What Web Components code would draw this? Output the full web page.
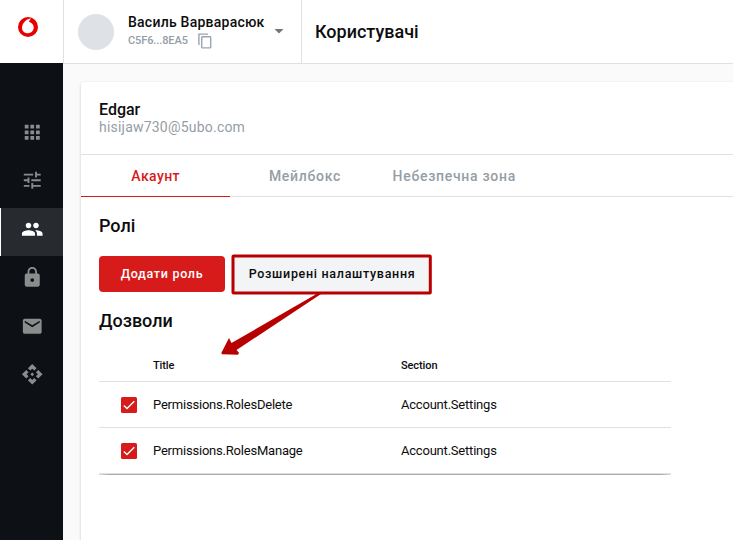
<!DOCTYPE html>
<html lang="uk">
<head>
<meta charset="utf-8">
<title>Користувачі</title>
<style>
html,body{margin:0;height:540px;overflow:hidden}
body{font-family:Roboto,"Liberation Sans",sans-serif;color:#0d0d0d;background:#fafafa}
</style>
</head>
<body>
<admin-app>
  <brand-logo slot="logo"></brand-logo>
  <user-menu slot="top" code="C5F6...8EA5">Василь Варварасюк</user-menu>
  <page-title slot="top">Користувачі</page-title>
  <side-nav slot="nav">
    <nav-item icon="apps"></nav-item>
    <nav-item icon="tune"></nav-item>
    <nav-item icon="people" active></nav-item>
    <nav-item icon="lock"></nav-item>
    <nav-item icon="mail"></nav-item>
    <nav-item icon="api"></nav-item>
  </side-nav>
  <user-card>
    <span slot="name">Edgar</span>
    <span slot="email">hisijaw730@5ubo.com</span>
    <tab-item slot="tabs" active>Акаунт</tab-item>
    <tab-item slot="tabs">Мейлбокс</tab-item>
    <tab-item slot="tabs">Небезпечна зона</tab-item>
    <section-title>Ролі</section-title>
    <button-row>
      <ui-button primary>Додати роль</ui-button>
      <ui-button marked>Розширені налаштування</ui-button>
    </button-row>
    <section-title>Дозволи</section-title>
    <permission-table>
      <permission-row head><span slot="title">Title</span><span slot="section">Section</span></permission-row>
      <permission-row><span slot="title">Permissions.RolesDelete</span><span slot="section">Account.Settings</span></permission-row>
      <permission-row><span slot="title">Permissions.RolesManage</span><span slot="section">Account.Settings</span></permission-row>
    </permission-table>
  </user-card>
</admin-app>
<script>
const define = (name, html) => customElements.define(name, class extends HTMLElement {
  constructor() {
    super();
    this.attachShadow({mode: 'open'}).innerHTML = typeof html === 'function' ? html(this) : html;
  }
});

define('admin-app', `<style>
:host{display:grid;grid-template:64px 476px / 63px 1fr;width:733px;height:540px;overflow:hidden}
.logo{background:#fff;height:63px}
.top{display:flex;box-sizing:border-box;background:#fff;border-bottom:1px solid #e0e0e0;border-left:1px solid #e0e0e0}
.nav{background:#0d1014;margin-top:-1px}
main{padding:18px 0 0 18px;overflow:hidden}
</style><div class="logo"><slot name="logo"></slot></div><header class="top"><slot name="top"></slot></header><nav class="nav"><slot name="nav"></slot></nav><main><slot></slot></main>`);

define('brand-logo', `<style>:host{display:block;padding:17px 0 0 18px}svg{display:block}</style>
<svg width="20" height="20" viewBox="0 0 20 20"><circle cx="10" cy="10" r="10" fill="#e60000"/><path fill="#fff" d="M13.200 1.400C10.500 1.500 8.200 2.900 6.400 4.900C4.900 6.500 4 8.500 4 10.700C4 14 6.600 16.200 9.900 16.200C13.200 16.200 15.700 13.700 15.700 10.500C15.700 7.600 13.900 5.500 11.200 4.900C11.100 3.400 11.900 2.100 13.200 1.400Z"/></svg>`);

define('user-menu', el => `<style>
:host{display:flex;box-sizing:border-box;width:238px;height:63px;padding:14px 0 0 14px;border-right:1px solid #e0e0e0}
.avatar{width:36px;height:36px;border-radius:50%;background:#dee2e6}
.info{margin-left:14px;width:138px}
.name{font:500 14px/16px Roboto,sans-serif;white-space:nowrap;letter-spacing:.24px}
.code{display:flex;align-items:center;font-size:11px;font-weight:500;letter-spacing:-.1px;line-height:16px;color:#959da5;height:18px;margin-top:2px;gap:10px}
.code svg{flex:none}
.arrow{margin:14px 0 0 8px}
</style><div class="avatar"></div><div class="info"><div class="name"><slot></slot></div><div class="code"><span>${el.getAttribute('code')}</span><svg width="14" height="16" viewBox="0 0 14 16" fill="none" stroke="#9ba5ae" stroke-width="1.4"><path d="M.9 12V1.1H10"/><rect x="3.7" y="3.7" width="9" height="11.2" rx=".7"/></svg></div></div><svg class="arrow" width="10" height="6" viewBox="0 0 10 6"><path d="M.5 1h9L5 5.5z" fill="#757575"/></svg>`);

define('page-title', `<style>:host{display:block;padding:21px 0 0 13px;font-size:18px;line-height:21px;font-weight:500}</style><slot></slot>`);

define('side-nav', `<style>:host{display:flex;flex-direction:column;padding-top:48px}</style><slot></slot>`);

const icons = {
  apps: 'M4 8h4V4H4v4zm6 12h4v-4h-4v4zm-6 0h4v-4H4v4zm0-6h4v-4H4v4zm6 0h4v-4h-4v4zm6-10v4h4V4h-4zm-6 4h4V4h-4v4zm6 6h4v-4h-4v4zm0 6h4v-4h-4v4z',
  tune: 'M3 17v2h6v-2H3zM3 5v2h10V5H3zm10 16v-2h8v-2h-8v-2h-2v6h2zM7 9v2H3v2h4v2h2V9H7zm14 4v-2H11v2h10zm-6-4h2V7h4V5h-4V3h-2v6z',
  people: 'M16 11c1.660 0 2.990-1.340 2.990-3S17.660 5 16 5s-3 1.340-3 3 1.340 3 3 3zm-8 0c1.660 0 2.990-1.340 2.990-3S9.660 5 8 5 5 6.340 5 8s1.340 3 3 3zm0 2c-2.330 0-7 1.170-7 3.500V19h14v-2.500c0-2.330-4.670-3.500-7-3.500zm8 0c-.29 0-.62.02-.97.05 1.160.84 1.970 1.970 1.970 3.450V19h6v-2.500c0-2.330-4.670-3.500-7-3.500z',
  lock: 'M18 8h-1V6c0-2.76-2.24-5-5-5S7 3.240 7 6v2H6c-1.100 0-2 .9-2 2v10c0 1.100.9 2 2 2h12c1.100 0 2-.9 2-2V10c0-1.100-.9-2-2-2zm-6 9c-1.100 0-2-.9-2-2s.9-2 2-2 2 .9 2 2-.9 2-2 2zm3.100-9H8.900V6c0-1.710 1.390-3.100 3.100-3.100s3.100 1.390 3.100 3.100v2z',
  mail: 'M20 4H4c-1.100 0-2 .9-2 2v12c0 1.100.9 2 2 2h16c1.100 0 2-.9 2-2V6c0-1.100-.9-2-2-2zm0 4l-8 5-8-5V6l8 5 8-5v2z',
  api: 'M14 12l-2 2-2-2 2-2 2 2zm-2-6l2.120 2.120 2.500-2.500L12 1 7.380 5.620l2.500 2.500L12 6zm-6 6l2.120-2.120-2.500-2.500L1 12l4.620 4.620 2.500-2.500L6 12zm12 0l-2.120 2.120 2.500 2.500L23 12l-4.620-4.620-2.500 2.500L18 12zm-6 6l-2.120-2.120-2.500 2.500L12 23l4.620-4.620-2.500-2.500L12 18z'
};
define('nav-item', el => `<style>
:host{display:block;box-sizing:border-box;height:48.6px;padding:9.500px 0 0 21px;color:#8b8c8e}
:host([active]){color:#fff;background:linear-gradient(90deg,#fff 1px,#272a2e 1px);background-size:100% 48px;background-repeat:no-repeat}
svg{display:block;fill:currentColor}
</style><svg width="22.500" height="22.500" viewBox="0 0 24 24"><path d="${icons[el.getAttribute('icon')]}"/></svg>`);

define('user-card', `<style>
:host{display:block;background:#fff;height:480px;width:700px;border-radius:4px;box-shadow:0 1px 3px rgba(0,0,0,.2)}
.head{box-sizing:border-box;height:73px;padding:18px 18px 0;border-bottom:1px solid #e0e0e0;display:flex;flex-direction:column}
.name{font:500 16px/19px Roboto,sans-serif}
.email{font-size:14px;line-height:17px;color:#959da5;letter-spacing:.21px}
.tabs{display:flex;box-sizing:border-box;height:42px;box-shadow:inset 0 -1px #e0e0e0}
.body{padding:18px}
</style><div class="head"><div class="name"><slot name="name"></slot></div><div class="email"><slot name="email"></slot></div></div><div class="tabs"><slot name="tabs"></slot></div><div class="body"><slot></slot></div>`);

define('tab-item', `<style>
:host{display:block;box-sizing:border-box;width:149.300px;height:42px;text-align:center;font-size:14px;line-height:42px;font-weight:500;letter-spacing:.7px;color:#959da5}
:host([active]){color:#d71a1a;box-shadow:inset 0 -1px #d71a1a;letter-spacing:.4px}
</style><slot></slot>`);

define('section-title', `<style>:host{display:block;font-size:18px;line-height:22px;font-weight:500}</style><slot></slot>`);
define('button-row', `<style>:host{display:flex;gap:8px;padding:19px 0 18px}</style><slot></slot>`);

define('ui-button', el => `<style>
:host{display:block;position:relative;box-sizing:border-box;height:36px;width:198px;border-radius:4px;background:#f3f4f6;text-align:center;font-size:12.500px;line-height:36px;font-weight:500;letter-spacing:.7px;white-space:nowrap}
:host([primary]){width:126px;background:#d71a1a;color:#fff}
.mark{position:absolute;left:-11px;top:-2px;overflow:visible;pointer-events:none}
</style><slot></slot>${el.hasAttribute('marked') ? '<svg class="mark" width="210" height="104"><rect x="11" y="2" width="197.300" height="37" rx=".5" fill="none" stroke="#b80000" stroke-width="3"/><path d="M94.500 40H99L14.500 96L17 98.800L16 100.700L0 100.300L-.7 99L7 84L9.500 89Z" fill="#b80000"/></svg>' : ''}`);

define('permission-table', `<style>
:host{display:block;width:572px;padding-top:17px}
.end{height:1px;background:linear-gradient(90deg,#e0e0e0,#aaa 10px,#aaa 562px,#e0e0e0)}
</style><slot></slot><div class="end"></div>`);

define('permission-row', el => `<style>
:host{display:grid;grid-template-columns:54px 248px 1fr;align-items:center;box-sizing:border-box;height:46px;border-bottom:1px solid #e0e0e0;font-size:13px;line-height:18px;letter-spacing:-.21px}
:host([head]){font-size:11px;font-weight:500;height:33px;padding-top:2px;letter-spacing:-.1px}
svg{margin-left:22px;display:block}
</style><div>${el.hasAttribute('head') ? '' : '<svg width="16" height="16" viewBox="0 0 16 16"><rect width="16" height="16" rx="1.500" fill="#d71a1a"/><path d="M2.800 8.400L6 11.600L13.300 4.300" fill="none" stroke="#fff" stroke-width="1.400"/></svg>'}</div><slot name="title"></slot><slot name="section"></slot>`);
</script>
</body>
</html>
